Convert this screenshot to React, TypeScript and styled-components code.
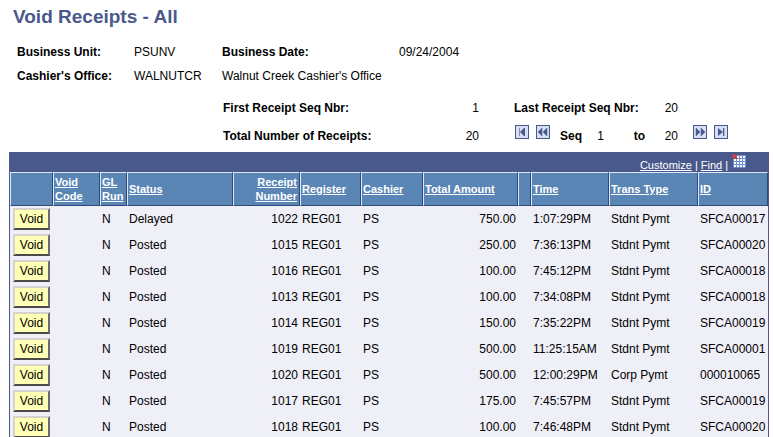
import React from "react";
import styled, { createGlobalStyle } from "styled-components";

const GlobalStyle = createGlobalStyle`
  body {
    margin: 0;
    background: #ffffff;
    color: #000000;
    font-family: "Liberation Sans", Arial, sans-serif;
    font-size: 12px;
    line-height: 16px;
  }
`;

const Page = styled.main`
  padding: 6px 4px 0 9px;
`;

const Title = styled.h1`
  margin: 0 0 16px 4px;
  color: #4a598c;
  font-size: 19px;
  line-height: 22px;
`;

const Details = styled.dl`
  display: grid;
  grid-template-columns: 117px 88px 177px 1fr;
  row-gap: 8px;
  margin: 0;
  padding-left: 8px;
`;

const Label = styled.dt`
  font-weight: bold;
  white-space: nowrap;
`;

const Value = styled.dd<{ $span?: number; $right?: boolean }>`
  margin: 0;
  grid-column: span ${(p) => p.$span ?? 1};
  text-align: ${(p) => (p.$right ? "right" : "left")};
`;

const Totals = styled.dl`
  display: grid;
  grid-template-columns: 196px 60px 163px 36px;
  margin: 16px 0 0 214px;

  & > dt:nth-of-type(2) {
    padding-left: 35px;
  }
`;

const PagerRow = styled.div`
  display: flex;
  align-items: center;
  margin: 8px 0 0 214px;
  height: 24px;
`;

const TotalLabel = styled.span`
  width: 196px;
  font-weight: bold;
`;

const TotalValue = styled.span`
  width: 60px;
  text-align: right;
`;

const Pager = styled.nav`
  display: flex;
  align-items: center;
  padding-left: 36px;
`;

const ButtonPair = styled.div`
  display: flex;
  gap: 7px;
  padding-bottom: 8px;
`;

const PagerButton = styled.button`
  display: block;
  width: 14px;
  height: 14px;
  padding: 0;
  border: 0;
  background: none;
`;

const RangeText = styled.span<{ $width: number; $bold?: boolean }>`
  width: ${(p) => p.$width}px;
  text-align: right;
  font-weight: ${(p) => (p.$bold ? "bold" : "normal")};

  & + div {
    margin-left: 15px;
  }
`;

const Grid = styled.section`
  margin-top: 4px;
  border: solid #4a598c;
  border-width: 0 1px;
  background: #efeff7;
`;

const GridBar = styled.header`
  display: flex;
  justify-content: flex-end;
  align-items: flex-end;
  gap: 3px;
  height: 20px;
  padding-right: 22px;
  background: #4a598c;
  color: #ffffff;
  font-size: 11px;
  line-height: 14px;
`;

const BarLink = styled.a`
  color: #ffffff;
`;

const GridIconLink = styled.a`
  align-self: flex-start;
  margin: 2px 0 0 1px;

  svg {
    display: block;
  }
`;

const Table = styled.table`
  width: 100%;
  table-layout: fixed;
  border-collapse: separate;
  border-spacing: 0;
`;

const Column = styled.col<{ $width: number }>`
  width: ${(p) => p.$width}px;
`;

const HeadCell = styled.th<{ $right?: boolean }>`
  box-sizing: border-box;
  height: 34px;
  padding: 2px 2px 2px 1px;
  border: 1px solid;
  border-color: #dee7f7 #31497b #31497b #dee7f7;
  background: #5a86b5;
  font-size: 11px;
  line-height: 14px;
  text-align: ${(p) => (p.$right ? "right" : "left")};
`;

const SortLink = styled.a`
  color: #ffffff;
`;

const Cell = styled.td<{ $right?: boolean }>`
  box-sizing: border-box;
  height: 26px;
  padding: 0 2px;
  white-space: nowrap;
  text-align: ${(p) => (p.$right ? "right" : "left")};
`;

const ActionCell = styled(Cell)`
  padding-left: 3px;
`;

const VoidButton = styled.button`
  display: block;
  box-sizing: border-box;
  width: 37px;
  height: 22px;
  padding: 0;
  border: 2px solid;
  border-color: #d6d3ce #6b6b6b #4a4a4a #d6d3ce;
  background: #ffffb5;
  color: #000000;
  font: 12px/16px "Liberation Sans", Arial, sans-serif;
`;

const pagerShapes = {
  first: (
    <>
      <path d="M4 3h1v8H4z" fill="#8c8c94" />
      <path d="M5 7l4-4v8zM9 3h1v8H9z" fill="#4a598c" />
    </>
  ),
  previous: <path d="M2 7l4-4v8zM7 7l4-4v8z" fill="#4a598c" stroke="#4a598c" strokeWidth="0.5" />,
  next: <path d="M12 7L8 3v8zM7 7L3 3v8z" fill="#4a598c" stroke="#4a598c" strokeWidth="0.5" />,
  last: (
    <>
      <path d="M4 3v8l5-4z" fill="#4a598c" />
      <path d="M9 3h1v8H9z" fill="#4a598c" />
      <path d="M10 3h1v8h-1z" fill="#c0b8b8" />
    </>
  ),
};

function PagerControl({ kind, label }: { kind: keyof typeof pagerShapes; label: string }) {
  return (
    <PagerButton type="button" aria-label={label}>
      <svg width="14" height="14" viewBox="0 0 14 14" display="block">
        <rect x="0.5" y="0.5" width="13" height="13" fill="#d6dff7" stroke="#4a598c" />
        {pagerShapes[kind]}
      </svg>
    </PagerButton>
  );
}

function SpreadsheetIcon() {
  return (
    <svg width="14" height="14" viewBox="0 0 14 14">
      <rect x="1" y="1" width="13" height="13" fill="#6b8ece" />
      <path
        d="M2 2h2v2H2zM5 2h2v2H5zM8 2h2v2H8zM11 2h2v2h-2zM2 5h2v2H2zM5 5h2v2H5zM8 5h2v2H8zM11 5h2v2h-2zM2 8h2v2H2zM5 8h2v2H5zM8 8h2v2H8zM11 8h2v2h-2zM2 11h2v2H2zM5 11h2v2H5zM8 11h2v2H8zM11 11h2v2h-2z"
        fill="#ffffff"
      />
      <path d="M0 0h2l2 2 1-1v4H1l1-1-2-2z" fill="#d63942" />
    </svg>
  );
}

const columns: { title: string; width: number; right?: boolean }[] = [
  { title: "", width: 43 },
  { title: "Void Code", width: 47 },
  { title: "GL Run", width: 27 },
  { title: "Status", width: 106 },
  { title: "Receipt Number", width: 67, right: true },
  { title: "Register", width: 61 },
  { title: "Cashier", width: 62 },
  { title: "Total Amount", width: 95 },
  { title: "", width: 13 },
  { title: "Time", width: 78 },
  { title: "Trans Type", width: 89 },
  { title: "ID", width: 70 },
];

const receipts = [
  ["Delayed", "1022", "750.00", "1:07:29PM", "Stdnt Pymt", "SFCA00017"],
  ["Posted", "1015", "250.00", "7:36:13PM", "Stdnt Pymt", "SFCA00020"],
  ["Posted", "1016", "100.00", "7:45:12PM", "Stdnt Pymt", "SFCA00018"],
  ["Posted", "1013", "100.00", "7:34:08PM", "Stdnt Pymt", "SFCA00018"],
  ["Posted", "1014", "150.00", "7:35:22PM", "Stdnt Pymt", "SFCA00019"],
  ["Posted", "1019", "500.00", "11:25:15AM", "Stdnt Pymt", "SFCA00001"],
  ["Posted", "1020", "500.00", "12:00:29PM", "Corp Pymt", "000010065"],
  ["Posted", "1017", "175.00", "7:45:57PM", "Stdnt Pymt", "SFCA00019"],
  ["Posted", "1018", "100.00", "7:46:48PM", "Stdnt Pymt", "SFCA00020"],
];

export default function App() {
  return (
    <>
      <GlobalStyle />
      <Page>
        <Title>Void Receipts - All</Title>
        <Details>
          <Label>Business Unit:</Label>
          <Value>PSUNV</Value>
          <Label>Business Date:</Label>
          <Value>09/24/2004</Value>
          <Label>Cashier's Office:</Label>
          <Value>WALNUTCR</Value>
          <Value $span={2}>Walnut Creek Cashier's Office</Value>
        </Details>
        <Totals>
          <Label>First Receipt Seq Nbr:</Label>
          <Value $right>1</Value>
          <Label>Last Receipt Seq Nbr:</Label>
          <Value $right>20</Value>
        </Totals>
        <PagerRow>
          <TotalLabel>Total Number of Receipts:</TotalLabel>
          <TotalValue>20</TotalValue>
          <Pager aria-label="Receipt range">
            <ButtonPair>
              <PagerControl kind="first" label="First" />
              <PagerControl kind="previous" label="Previous" />
            </ButtonPair>
            <RangeText $width={32} $bold>Seq</RangeText>
            <RangeText $width={22}>1</RangeText>
            <RangeText $width={41} $bold>to</RangeText>
            <RangeText $width={33}>20</RangeText>
            <ButtonPair>
              <PagerControl kind="next" label="Next" />
              <PagerControl kind="last" label="Last" />
            </ButtonPair>
          </Pager>
        </PagerRow>
        <Grid>
          <GridBar>
            <BarLink href="#customize">Customize</BarLink>
            <span>|</span>
            <BarLink href="#find">Find</BarLink>
            <span>|</span>
            <GridIconLink href="#download" aria-label="Download">
              <SpreadsheetIcon />
            </GridIconLink>
          </GridBar>
          <Table>
            <colgroup>
              {columns.map((c, i) => (
                <Column key={i} $width={c.width} />
              ))}
            </colgroup>
            <thead>
              <tr>
                {columns.map((c, i) => (
                  <HeadCell key={i} scope="col" $right={c.right}>
                    {c.title && <SortLink href="#sort">{c.title}</SortLink>}
                  </HeadCell>
                ))}
              </tr>
            </thead>
            <tbody>
              {receipts.map(([status, number, amount, time, type, id]) => (
                <tr key={number}>
                  <ActionCell>
                    <VoidButton type="button">Void</VoidButton>
                  </ActionCell>
                  <Cell />
                  <Cell>N</Cell>
                  <Cell>{status}</Cell>
                  <Cell $right>{number}</Cell>
                  <Cell>REG01</Cell>
                  <Cell>PS</Cell>
                  <Cell $right>{amount}</Cell>
                  <Cell />
                  <Cell>{time}</Cell>
                  <Cell>{type}</Cell>
                  <Cell>{id}</Cell>
                </tr>
              ))}
            </tbody>
          </Table>
        </Grid>
      </Page>
    </>
  );
}
